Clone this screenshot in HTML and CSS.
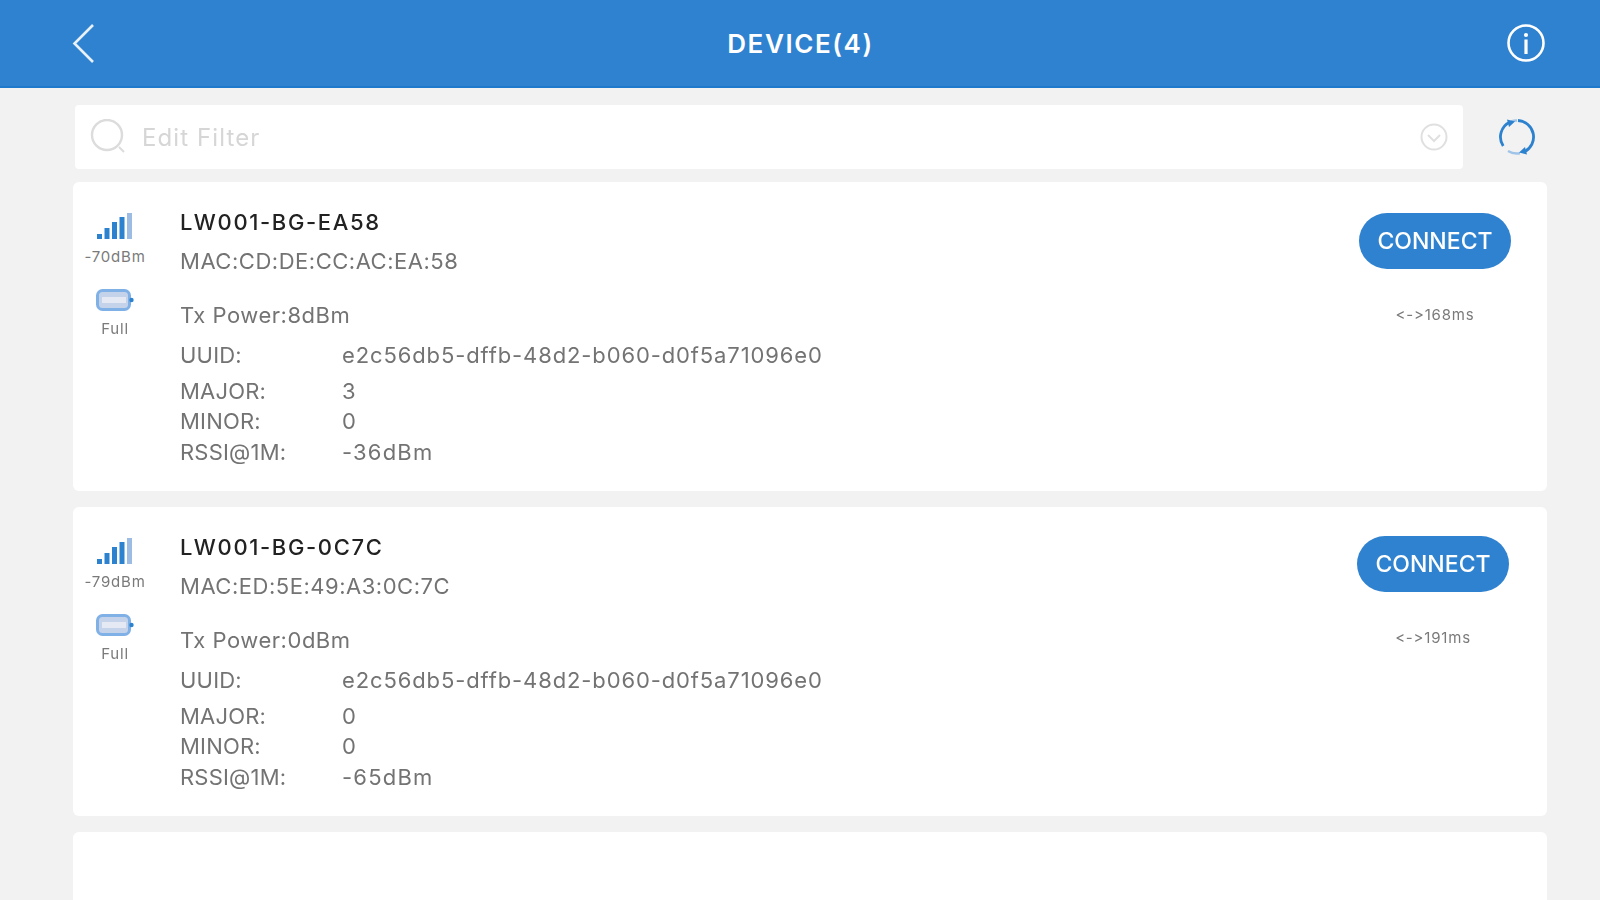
FILE: index.html
```html
<!DOCTYPE html>
<html lang="en">
<head>
<meta charset="utf-8">
<title>Device</title>
<link rel="stylesheet" href="styles.css">
</head>
<body>
<div class="page">
  <header class="topbar">
    <svg class="back" viewBox="0 0 24 40" width="24" height="40"><path d="M22 2 L3.5 20.5 L22 39" fill="none" stroke="#e8f1fa" stroke-width="2.6"/></svg>
    <h1 class="title">DEVICE(4)</h1>
    <svg class="info" viewBox="0 0 40 40" width="40" height="40"><circle cx="20" cy="20" r="17.5" fill="none" stroke="#fff" stroke-width="2.6"/><circle cx="20" cy="12" r="2.1" fill="#fff"/><rect x="18.4" y="16.5" width="3.2" height="14.5" fill="#fff"/></svg>
  </header>
  <main class="content">
    <div class="filter-row">
      <div class="filter">
        <svg class="search" viewBox="0 0 36 36" width="36" height="36"><circle cx="17" cy="16" r="15" fill="none" stroke="#dcdcdc" stroke-width="2.4"/><path d="M29 28 L34 33" stroke="#dcdcdc" stroke-width="2"/></svg>
        <span class="placeholder">Edit Filter</span>
        <svg class="chev" viewBox="0 0 28 28" width="28" height="28"><circle cx="14" cy="14" r="12.5" fill="none" stroke="#e0e0e0" stroke-width="2"/><path d="M8 12 L14 18 L20 12" fill="none" stroke="#e0e0e0" stroke-width="2"/></svg>
      </div>
      <svg class="refresh" viewBox="0 0 40 40" width="40" height="40"><path d="M6.2 29 A16.5 16.5 0 0 1 13 5 M21 3.5 A16.5 16.5 0 0 1 27.5 34.7" fill="none" stroke="#2d82cf" stroke-width="2.8"/><path d="M11 34 A16.5 16.5 0 0 0 23 36.2 M14 4.5 A16.5 16.5 0 0 1 20 3.5" fill="none" stroke="#9fc4e8" stroke-width="2.4"/><path d="M10 2.5 L18 4.5 L12 10Z M30 37.5 L22 35.5 L28 30Z" fill="#2d82cf"/></svg>
    </div>

    <section class="card">
      <div class="status">
        <svg class="bars" viewBox="0 0 36 26" width="36" height="26"><rect x="0" y="21" width="5" height="5" fill="#2d82cf"/><rect x="7.5" y="15" width="5" height="11" fill="#2d82cf"/><rect x="15" y="9" width="5" height="17" fill="#2d82cf"/><rect x="22.5" y="4" width="5" height="22" fill="#2d82cf"/><rect x="30" y="0" width="5" height="26" fill="#9dbce3"/></svg>
        <div class="small rssi">-70dBm</div>
        <svg class="battery" viewBox="0 0 38 22" width="38" height="22"><rect x="1.5" y="1.5" width="32" height="19" rx="5" fill="#c5d3ea" stroke="#7fb0e6" stroke-width="3"/><rect x="6" y="8" width="24" height="6" fill="#e4e9f3"/><circle cx="35.5" cy="11" r="2.2" fill="#2d82cf"/></svg>
        <div class="small full">Full</div>
      </div>
      <div class="details">
        <div class="name">LW001-BG-EA58</div>
        <div class="line mac">MAC:CD:DE:CC:AC:EA:58</div>
        <div class="line tx">Tx Power:8dBm</div>
        <div class="kv uuid"><span>UUID:</span><span class="val-long">e2c56db5-dffb-48d2-b060-d0f5a71096e0</span></div>
        <div class="kv major"><span>MAJOR:</span><span>3</span></div>
        <div class="kv"><span>MINOR:</span><span>0</span></div>
        <div class="kv"><span>RSSI@1M:</span><span class="val-dbm">-36dBm</span></div>
      </div>
      <div class="action">
        <button class="connect">CONNECT</button>
        <div class="small delay">&lt;-&gt;168ms</div>
      </div>
    </section>

    <section class="card">
      <div class="status">
        <svg class="bars" viewBox="0 0 36 26" width="36" height="26"><rect x="0" y="21" width="5" height="5" fill="#2d82cf"/><rect x="7.5" y="15" width="5" height="11" fill="#2d82cf"/><rect x="15" y="9" width="5" height="17" fill="#2d82cf"/><rect x="22.5" y="4" width="5" height="22" fill="#2d82cf"/><rect x="30" y="0" width="5" height="26" fill="#9dbce3"/></svg>
        <div class="small rssi">-79dBm</div>
        <svg class="battery" viewBox="0 0 38 22" width="38" height="22"><rect x="1.5" y="1.5" width="32" height="19" rx="5" fill="#c5d3ea" stroke="#7fb0e6" stroke-width="3"/><rect x="6" y="8" width="24" height="6" fill="#e4e9f3"/><circle cx="35.5" cy="11" r="2.2" fill="#2d82cf"/></svg>
        <div class="small full">Full</div>
      </div>
      <div class="details">
        <div class="name">LW001-BG-0C7C</div>
        <div class="line mac">MAC:ED:5E:49:A3:0C:7C</div>
        <div class="line tx">Tx Power:0dBm</div>
        <div class="kv uuid"><span>UUID:</span><span class="val-long">e2c56db5-dffb-48d2-b060-d0f5a71096e0</span></div>
        <div class="kv major"><span>MAJOR:</span><span>0</span></div>
        <div class="kv"><span>MINOR:</span><span>0</span></div>
        <div class="kv"><span>RSSI@1M:</span><span class="val-dbm">-65dBm</span></div>
      </div>
      <div class="action action-alt">
        <button class="connect">CONNECT</button>
        <div class="small delay">&lt;-&gt;191ms</div>
      </div>
    </section>

    <section class="card card-empty"></section>
  </main>
</div>
</body>
</html>
```

FILE: styles.css
```css
* { box-sizing: border-box; }
html, body { margin: 0; height: 100%; overflow: hidden; }
body {
  background: #f2f2f2;
  font-family: "Inter", "Liberation Sans", sans-serif;
  font-feature-settings: "calt" 0, "liga" 0;
  color: #6f6f6f;
}
.page { display: flex; flex-direction: column; height: 900px; overflow: hidden; filter: blur(0.5px); }

.topbar {
  flex: none; height: 88px; background: #2f82cf; border-bottom: 2px solid #1e78cb;
  display: flex; align-items: center; justify-content: space-between;
  padding: 0 54px 0 71px;
}
.title { margin: 0; font-size: 26px; font-weight: 600; color: #fff; letter-spacing: 1.6px; }
.back, .info { display: block; }

.content { padding: 17px 53px 0 73px; display: flex; flex-direction: column; }
.filter-row { display: flex; align-items: center; padding-left: 2px; }
.filter {
  width: 1388px; height: 64px; background: #fff; border-radius: 4px;
  display: flex; align-items: center; padding: 0 15px;
}
.search { flex: none; }
.placeholder { flex: 1; margin-left: 16px; font-size: 24px; color: #d6d6d6; letter-spacing: 1.1px; }
.refresh { margin-left: 34px; }

.card {
  height: 309px; margin-top: 16px; background: #fff; border-radius: 6px;
  display: flex;
}
.filter-row + .card { margin-top: 13px; }
.card-empty { height: 100px; }

.status {
  width: 84px; margin-right: 23px; flex: none;
  display: flex; flex-direction: column; align-items: center; padding-top: 31px;
}
.small { font-size: 15px; color: #7a7a7a; white-space: nowrap; letter-spacing: 0.8px; }
.rssi { margin-top: 9px; line-height: 18px; }
.battery { margin-top: 23px; }
.full { margin-top: 9px; line-height: 18px; }

.details { flex: 1; padding-top: 28px; }
.name { font-size: 22px; font-weight: 500; color: #222; line-height: 24px; letter-spacing: 1.65px; }
.line, .kv { font-size: 22px; line-height: 30.5px; color: #737373; white-space: nowrap; letter-spacing: 0.52px; }
.mac { margin-top: 12px; }
.tx { margin-top: 23px; }
.uuid { margin-top: 10px; }
.major { margin-top: 5px; }
.kv { display: flex; letter-spacing: 0.2px; }
.kv span:first-child { width: 162px; flex: none; }
.val-long { letter-spacing: 0.88px; }
.val-dbm { letter-spacing: 1.2px; }

.action {
  width: 152px; flex: none; margin-right: 36px; padding-top: 31px;
  display: flex; flex-direction: column; align-items: center;
}
.action-alt { margin-right: 38px; padding-top: 29px; }
.connect {
  width: 152px; height: 56px; border: 0; border-radius: 28px; background: #2f82cf;
  color: #fff; font: 500 23px "Inter", "Liberation Sans", sans-serif; padding: 0;
}
.delay { margin-top: 37px; line-height: 18px; }
```
